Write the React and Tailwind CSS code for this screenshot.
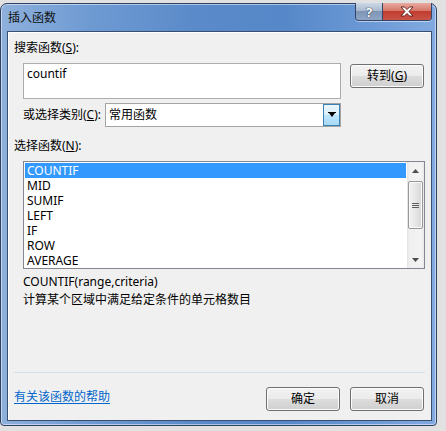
const FONT = "[font-family:'Noto_Sans','Noto_Sans_CJK_SC',sans-serif]"

const BTN =
  "flex items-center justify-center w-[74px] h-[24px] rounded-[3px] border border-[#707070] text-[12px] leading-[16px] text-black bg-[linear-gradient(to_bottom,#f2f2f2_0%,#ebebeb_50%,#dddddd_50%,#cfcfcf_100%)] shadow-[inset_0_0_0_1px_#fbfbfb]"

const functions = ["COUNTIF", "MID", "SUMIF", "LEFT", "IF", "ROW", "AVERAGE"]

function ScrollArrow({ up }) {
  return (
    <div className="h-[17px] flex items-center justify-center">
      <svg width="7" height="4" viewBox="0 0 7 4">
        <path d={up ? "M0 4 L3.5 0 L7 4 Z" : "M0 0 L3.5 4 L7 0 Z"} fill="#4d4d4d" />
      </svg>
    </div>
  )
}

export default function App() {
  return (
    <div className={`w-[446px] h-[431px] overflow-hidden bg-[#e1e1e1] pt-[3px] ${FONT}`}>
      <div className="relative w-[437px] h-[423px] rounded-t-[7px] rounded-b-[4px] border border-[#2f4264] bg-[linear-gradient(to_right,#8eb0dc_0%,#6f9bd3_20%,#5a8ac9_45%,#5687c8_65%,#6c9ad6_85%,#82aae0_100%)] shadow-[inset_0_0_0_1px_rgba(255,255,255,0.5)]">
        {/* title */}
        <div className="h-[27px] flex items-center pl-[7px] text-[12px] leading-[16px] text-[#111]">
          插入函数
        </div>

        {/* caption buttons */}
        <div className="absolute top-[-1px] right-[4px] flex h-[18px] rounded-b-[4px] border border-t-0 border-[#33466a] overflow-hidden shadow-[0_1px_0_rgba(255,255,255,0.5)]">
          <div className="w-[27px] h-full flex items-center justify-center bg-[linear-gradient(to_bottom,#cdd8e6_0%,#a9bad1_45%,#7f95b6_50%,#8ea5c4_100%)] border-r border-[#33466a]">
            <span className="text-[13px] leading-[14px] font-bold text-white [text-shadow:0_0_1px_#1d2b45,0_0_1px_#1d2b45]">?</span>
          </div>
          <div className="w-[48px] h-full flex items-center justify-center bg-[linear-gradient(to_bottom,#e8aca2_0%,#d6776a_45%,#c13d30_50%,#c95447_100%)]">
            <svg width="14" height="11" viewBox="0 0 14 11">
              <path
                d="M1 1 L4.5 1 L7 3.6 L9.5 1 L13 1 L9 5.5 L13 10 L9.5 10 L7 7.4 L4.5 10 L1 10 L5 5.5 Z"
                fill="#fff"
                stroke="#5a1b14"
                strokeWidth="0.9"
                strokeLinejoin="round"
              />
            </svg>
          </div>
        </div>

        {/* content panel */}
        <div className="ml-[6px] w-[425px] h-[390px] border border-[#3a4e70] bg-[#f0f0f0] shadow-[inset_1px_1px_0_#ffffff] flex flex-col text-[12px] leading-[16px] text-black">
          <div className="pt-[8px] pl-[6px]">
            搜索函数(<u>S</u>):
          </div>

          <div className="mt-[7px] ml-[15px] flex items-start gap-[9px]">
            <div className="w-[318px] h-[36px] border border-[#abadb3] bg-white pl-[3px] pt-[2px]">
              countif
            </div>
            <div className={`${BTN} mt-[1px] border-[#3c7fb1] shadow-[inset_0_0_0_1px_#c9e6f7]`}>
              转到(<u>G</u>)
            </div>
          </div>

          <div className="mt-[4px] ml-[15px] flex items-center">
            <div className="w-[82px]">
              或选择类别(<u>C</u>):
            </div>
            <div className="w-[236px] h-[24px] border border-[#a5a5a5] bg-white flex items-center">
              <div className="flex-1 pl-[3px]">常用函数</div>
              <div className="w-[17px] h-[22px] border border-[#3c7fb1] bg-[linear-gradient(to_bottom,#eaf6fd_0%,#d9f0fc_50%,#bee6fd_50%,#a7d9f5_100%)] flex items-center justify-center">
                <svg width="8" height="6" viewBox="0 0 8 6">
                  <path d="M0 0 H8 V1 H7 L4 5 L1 1 H0 Z" fill="#000" />
                </svg>
              </div>
            </div>
          </div>

          <div className="mt-[11px] pl-[6px]">
            选择函数(<u>N</u>):
          </div>

          <div className="mt-[7px] ml-[15px] w-[402px] h-[108px] border border-[#828790] bg-white flex">
            <div className="w-[382px] pt-[1px] pl-[1px]">
              {functions.map((name, i) => (
                <div
                  key={name}
                  className={`w-[381px] h-[15px] leading-[15px] pl-[2px] overflow-hidden ${i === 0 ? "bg-[#3399ff] text-white" : ""}`}
                >
                  {name}
                </div>
              ))}
            </div>
            <div className="ml-[1px] w-[17px] h-full flex flex-col bg-[linear-gradient(to_right,#e3e3e3_0%,#f0f0f0_15%,#f3f3f3_85%,#e8e8e8_100%)]">
              <ScrollArrow up />
              <div className="mt-[2px] ml-[1px] w-[15px] h-[48px] rounded-[2px] border border-[#979797] bg-[linear-gradient(to_right,#f3f3f3_0%,#e6e6e6_50%,#d6d6d6_100%)] shadow-[inset_0_0_0_1px_#fafafa] flex flex-col items-center justify-center gap-[1px]">
                <div className="w-[7px] h-px bg-[#5f5f5f]" />
                <div className="w-[7px] h-px bg-[#5f5f5f]" />
                <div className="w-[7px] h-px bg-[#5f5f5f]" />
              </div>
              <div className="flex-1" />
              <ScrollArrow />
            </div>
          </div>

          <div className="mt-[5px] ml-[15px]">COUNTIF(range,criteria)</div>
          <div className="mt-[2px] ml-[15px]">计算某个区域中满足给定条件的单元格数目</div>

          <div className="mt-[64px] ml-[6px] w-[411px] h-px bg-[#d5dfe5]" />

          <div className="mt-[14px] ml-[6px] mr-[7px] flex items-start">
            <a href="#" className="pt-[2px] text-[#0066cc] underline underline-offset-[2px]">
              有关该函数的帮助
            </a>
            <div className="ml-auto flex gap-[10px]">
              <div className={BTN}>确定</div>
              <div className={BTN}>取消</div>
            </div>
          </div>
        </div>
      </div>
    </div>
  )
}
